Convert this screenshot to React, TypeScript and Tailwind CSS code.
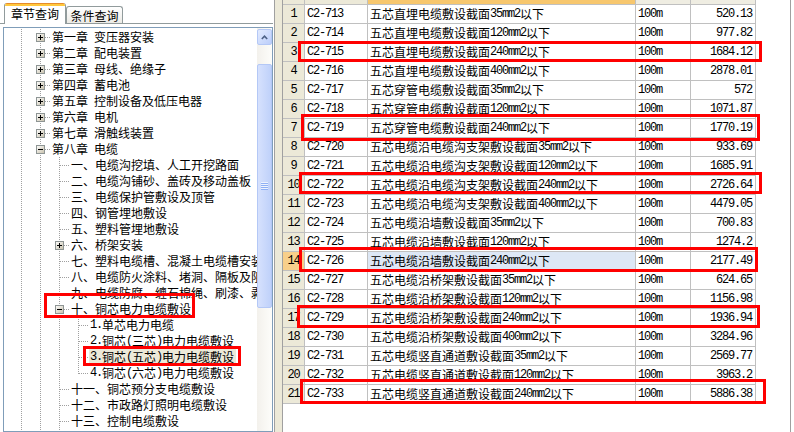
import React, { useId } from "react";

// split a string into ASCII runs (half-width) and CJK runs
function Txt({ s }: { s: string }) {
  const parts = s.match(/[\x20-\x7e]+|[^\x20-\x7e]+/g) ?? [];
  return (
    <>
      {parts.map((p, i) =>
        /^[\x20-\x7e]/.test(p) ? (
          <span
            key={i}
            className="font-['Liberation_Mono',monospace] text-[12px] tracking-[-1.2px] whitespace-pre"
          >
            {p}
          </span>
        ) : (
          <span key={i}>{p}</span>
        )
      )}
    </>
  );
}

type TreeNode = {
  label: string;
  level: number;
  kind: "plus" | "minus" | "leaf";
  last?: boolean;
  sel?: boolean;
};

const tree: TreeNode[] = [
  { label: "第一章 变压器安装", level: 1, kind: "plus" },
  { label: "第二章 配电装置", level: 1, kind: "plus" },
  { label: "第三章 母线、绝缘子", level: 1, kind: "plus" },
  { label: "第四章 蓄电池", level: 1, kind: "plus" },
  { label: "第五章 控制设备及低压电器", level: 1, kind: "plus" },
  { label: "第六章 电机", level: 1, kind: "plus" },
  { label: "第七章 滑触线装置", level: 1, kind: "plus" },
  { label: "第八章 电缆", level: 1, kind: "minus" },
  { label: "一、电缆沟挖填、人工开挖路面", level: 2, kind: "leaf" },
  { label: "二、电缆沟铺砂、盖砖及移动盖板", level: 2, kind: "leaf" },
  { label: "三、电缆保护管敷设及顶管", level: 2, kind: "leaf" },
  { label: "四、钢管埋地敷设", level: 2, kind: "leaf" },
  { label: "五、塑料管埋地敷设", level: 2, kind: "leaf" },
  { label: "六、桥架安装", level: 2, kind: "plus" },
  { label: "七、塑料电缆槽、混凝土电缆槽安装", level: 2, kind: "leaf" },
  { label: "八、电缆防火涂料、堵洞、隔板及阻燃槽盒安装", level: 2, kind: "leaf" },
  { label: "九、电缆防腐、缠石棉绳、刷漆、剥皮", level: 2, kind: "leaf" },
  { label: "十、铜芯电力电缆敷设", level: 2, kind: "minus" },
  { label: "1.单芯电力电缆", level: 3, kind: "leaf" },
  { label: "2.铜芯(三芯)电力电缆敷设", level: 3, kind: "leaf" },
  { label: "3.铜芯(五芯)电力电缆敷设", level: 3, kind: "leaf", sel: true },
  { label: "4.铜芯(六芯)电力电缆敷设", level: 3, kind: "leaf", last: true },
  { label: "十一、铜芯预分支电缆敷设", level: 2, kind: "leaf" },
  { label: "十二、市政路灯照明电缆敷设", level: 2, kind: "leaf" },
  { label: "十三、控制电缆敷设", level: 2, kind: "leaf" },
  { label: "十四、电缆终端头及中间头制作安装", level: 2, kind: "leaf" },
];

function Guide({
  v,
  h,
  box,
}: {
  v?: "full" | "top";
  h?: boolean;
  box?: "plus" | "minus";
}) {
  const id = useId();
  return (
    <svg width="19" height="16" className="block shrink-0">
      {v && (
        <line
          x1="9.5"
          y1="0"
          x2="9.5"
          y2={v === "top" ? 9 : 16}
          stroke="#a0a0a0"
          strokeDasharray="1 1"
        />
      )}
      {h && (
        <line x1="10" y1="8.5" x2="19" y2="8.5" stroke="#a0a0a0" strokeDasharray="1 1" />
      )}
      {box && (
        <>
          <defs>
            <linearGradient id={id} x1="0" y1="0" x2="1" y2="1">
              <stop offset="0" stopColor="#ffffff" />
              <stop offset="1" stopColor="#c6bfa9" />
            </linearGradient>
          </defs>
          <rect x="5.5" y="4.5" width="8" height="8" fill={`url(#${id})`} stroke="#8e9594" />
          <line x1="7" y1="8.5" x2="12" y2="8.5" stroke="#000" />
          {box === "plus" && <line x1="9.5" y1="6" x2="9.5" y2="11" stroke="#000" />}
        </>
      )}
    </svg>
  );
}

function TreeRow({ n }: { n: TreeNode }) {
  const cells = [];
  for (let k = 0; k < n.level; k++) cells.push(<Guide key={k} v="full" />);
  cells.push(
    <Guide
      key="own"
      v={n.last ? "top" : "full"}
      h
      box={n.kind === "leaf" ? undefined : n.kind}
    />
  );
  return (
    <div className="flex h-[16px] items-center whitespace-nowrap">
      {cells}
      <span
        className={`ml-px flex h-[16px] items-center pl-px pr-[2px] ${
          n.sel ? "bg-[#ece9d8]" : ""
        }`}
      >
        <Txt s={n.label} />
      </span>
    </div>
  );
}

function ScrollBar() {
  return (
    <div className="flex w-[15px] shrink-0 flex-col bg-gradient-to-r from-[#f3f1ec] to-[#fdfdfa] pt-px">
      <div className="flex h-[16px] items-center justify-center rounded-[2px] border border-[#b4c8f6] bg-gradient-to-br from-[#e3ebfe] to-[#bccefa]">
        <svg width="7" height="5" viewBox="0 0 7 5">
          <path d="M0.8 4 L3.5 1.2 L6.2 4" stroke="#4d6185" strokeWidth="1.6" fill="none" />
        </svg>
      </div>
      <div className="pt-[19px]">
        <div className="flex h-[244px] flex-col items-center justify-center rounded-[2px] border border-[#b4c8f6] bg-gradient-to-r from-[#d6e1fd] to-[#bfd1fa]">
          {[0, 1, 2, 3].map((i) => (
            <div key={i} className="flex flex-col">
              <div className="h-px w-[7px] bg-[#eef3fe]" />
              <div className="h-px w-[7px] bg-[#8fb0f5]" />
            </div>
          ))}
        </div>
      </div>
    </div>
  );
}

function LeftPanel() {
  return (
    <div className="flex w-[273px] shrink-0 flex-col">
      {/* tabs */}
      <div className="flex h-[24px] shrink-0 items-end border-b border-[#919b9c] pl-[4px]">
        <div className="-mb-px flex h-[21px] w-[62px] flex-col overflow-hidden rounded-t-[3px] border-x border-[#919b9c] bg-white">
          <div className="h-px bg-[#e68b2c]" />
          <div className="h-[2px] bg-[#ffc73c]" />
          <div className="flex flex-1 items-center justify-center pb-[3px]">章节查询</div>
        </div>
        <div className="flex h-[17px] w-[57px] items-center justify-center rounded-t-[3px] border border-b-0 border-[#919b9c] bg-gradient-to-b from-white to-[#ecebe6] pt-[2px]">
          条件查询
        </div>
      </div>
      {/* tree */}
      <div className="min-h-0 flex-1 pl-[3px] pt-[3px]">
        <div className="flex h-full border border-[#7f9db9] bg-white">
          <div className="min-w-0 flex-1 overflow-hidden pl-[8px] pt-px">
            {tree.map((n, i) => (
              <TreeRow key={i} n={n} />
            ))}
          </div>
          <ScrollBar />
        </div>
      </div>
    </div>
  );
}

const rows: [string, string, string][] = [
  ["C2-713", "五芯直埋电缆敷设截面35mm2以下", "520.13"],
  ["C2-714", "五芯直埋电缆敷设截面120mm2以下", "977.82"],
  ["C2-715", "五芯直埋电缆敷设截面240mm2以下", "1684.12"],
  ["C2-716", "五芯直埋电缆敷设截面400mm2以下", "2878.01"],
  ["C2-717", "五芯穿管电缆敷设截面35mm2以下", "572"],
  ["C2-718", "五芯穿管电缆敷设截面120mm2以下", "1071.87"],
  ["C2-719", "五芯穿管电缆敷设截面240mm2以下", "1770.19"],
  ["C2-720", "五芯电缆沿电缆沟支架敷设截面35mm2以下", "933.69"],
  ["C2-721", "五芯电缆沿电缆沟支架敷设截面120mm2以下", "1685.91"],
  ["C2-722", "五芯电缆沿电缆沟支架敷设截面240mm2以下", "2726.64"],
  ["C2-723", "五芯电缆沿电缆沟支架敷设截面400mm2以下", "4479.05"],
  ["C2-724", "五芯电缆沿墙敷设截面35mm2以下", "700.83"],
  ["C2-725", "五芯电缆沿墙敷设截面120mm2以下", "1274.2"],
  ["C2-726", "五芯电缆沿墙敷设截面240mm2以下", "2177.49"],
  ["C2-727", "五芯电缆沿桥架敷设截面35mm2以下", "624.65"],
  ["C2-728", "五芯电缆沿桥架敷设截面120mm2以下", "1156.98"],
  ["C2-729", "五芯电缆沿桥架敷设截面240mm2以下", "1936.94"],
  ["C2-730", "五芯电缆沿桥架敷设截面400mm2以下", "3284.96"],
  ["C2-731", "五芯电缆竖直通道敷设截面35mm2以下", "2569.77"],
  ["C2-732", "五芯电缆竖直通道敷设截面120mm2以下", "3963.2"],
  ["C2-733", "五芯电缆竖直通道敷设截面240mm2以下", "5886.38"],
];

const cell = "flex h-[19px] items-center border-b border-r border-[#c0c0c0] overflow-hidden whitespace-nowrap";

function RightPanel() {
  return (
    <div className="flex min-w-0 flex-1">
      <div className="min-w-0 flex-1 bg-white">
        <div className="grid w-max grid-cols-[22px_63px_268px_55px_65px]">
          {/* header, scrolled so only its bottom edge shows */}
          <div className="h-[5px] border-b border-r border-[#c0c0c0] bg-[#ece9d8]" />
          <div className="h-[5px] border-b border-r border-[#c0c0c0] bg-[#ece9d8]" />
          <div className="h-[5px] border-b border-r border-[#c0c0c0] bg-[#f7c76e]" />
          <div className="h-[5px] border-b border-r border-[#c0c0c0] bg-[#efede2]" />
          <div className="h-[5px] border-b border-r border-[#c0c0c0] bg-[#efede2]" />
          {rows.map(([code, name, price], i) => {
            const sel = i === 13;
            return (
              <React.Fragment key={code}>
                <div
                  className={`${cell} justify-center ${sel ? "bg-[#f8cf8a]" : "bg-[#ece9d8]"}`}
                >
                  <Txt s={String(i + 1)} />
                </div>
                <div className={`${cell} pl-[2px]`}>
                  <Txt s={code} />
                </div>
                <div className={`${cell} pl-[2px] ${sel ? "bg-[#dde7f5]" : ""}`}>
                  <Txt s={name} />
                </div>
                <div className={`${cell} pl-[2px]`}>
                  <Txt s="100m" />
                </div>
                <div className={`${cell} justify-end pr-[3px]`}>
                  <Txt s={price} />
                </div>
              </React.Fragment>
            );
          })}
        </div>
      </div>
      <div className="w-px bg-[#a0a0a0]" />
      <div className="w-[3px] bg-white" />
    </div>
  );
}

export default function App() {
  return (
    <div className="relative flex h-[432px] w-[794px] overflow-hidden bg-white font-['Noto_Sans_CJK_SC',sans-serif] text-[12px] leading-none text-black">
      <LeftPanel />
      {/* splitter */}
      <div className="flex w-[10px] shrink-0">
        <div className="w-px bg-white" />
        <div className="w-px bg-[#a0a0a0]" />
        <div className="w-[7px] bg-[#ece9d8]" />
        <div className="w-px bg-[#a0a0a0]" />
      </div>
      <RightPanel />

      {/* red annotation boxes */}
      <div className="absolute left-[44px] top-[293px] h-[25px] w-[151px] border-[3px] border-[#ff0000]" />
      <div className="absolute left-[83px] top-[346px] h-[20px] w-[158px] border-[3px] border-[#ff0000]" />
      <div className="absolute left-[298px] top-[41px] h-[21px] w-[464px] border-[3px] border-[#ff0000]" />
      <div className="absolute left-[301px] top-[114px] h-[27px] w-[459px] border-[3px] border-[#ff0000]" />
      <div className="absolute left-[299px] top-[172px] h-[22px] w-[463px] border-[3px] border-[#ff0000]" />
      <div className="absolute left-[299px] top-[247px] h-[25px] w-[459px] border-[3px] border-[#ff0000]" />
      <div className="absolute left-[297px] top-[305px] h-[23px] w-[463px] border-[3px] border-[#ff0000]" />
      <div className="absolute left-[300px] top-[379px] h-[25px] w-[466px] border-[3px] border-[#ff0000]" />
    </div>
  );
}
